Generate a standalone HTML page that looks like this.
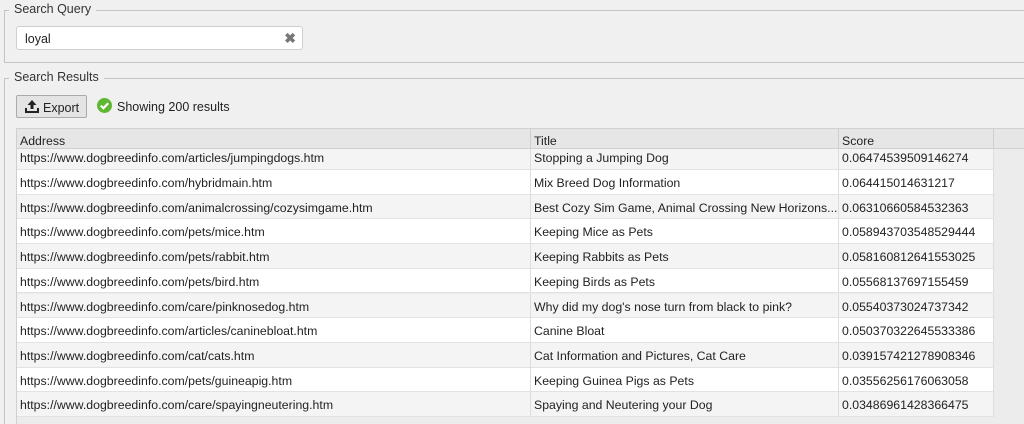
<!DOCTYPE html>
<html style="overflow:hidden;height:424px"><head><style>
*{box-sizing:border-box;margin:0;padding:0}
body{width:1024px;height:424px;background:#f0f0f0;font-family:"Liberation Sans",sans-serif;font-size:12px;color:#222;position:relative;overflow:hidden}
.fs{position:absolute;border:1px solid #c4c4c4;border-right:none}
.lg{position:absolute;background:#f0f0f0;padding:0 5px;font-size:12.5px;color:#333}
.inp{position:absolute;left:16px;top:26px;width:287px;height:24px;background:#fff;border:1px solid #cfcfcf;border-radius:3px;padding:5px 8px;font-size:12.5px}
.btn{position:absolute;left:16px;top:95px;width:71px;height:23px;border:1px solid #aaa;border-radius:2px;background:#e4e4e4;font-size:12.5px;padding:5px 0 0 26px}
.tbl{position:absolute;left:16px;top:128px;width:1008px;height:296px;background:#ececec;border:1px solid #d0d0d0;border-right:none;border-bottom:none;overflow:hidden}
.hd{position:absolute;top:0;height:20px;background:#e6e6e6;border-right:1px solid #cfcfcf;border-bottom:1px solid #cfcfcf;padding:5px 3px 0;font-size:12.3px}
.row{position:absolute;left:0;width:977px;height:24.7px}
.row div{position:absolute;top:0;height:100%;padding:6px 3px 0;border-right:1px solid #ddd;border-bottom:1px solid #e2e2e2;white-space:nowrap;overflow:hidden;font-size:12.3px}
.c1{left:0;width:514px}.c2{left:514px;width:308px}.c3{left:822px;width:155px}
</style></head><body>
<div class="fs" style="left:4px;top:10px;width:1030px;height:53px"></div>
<div class="lg" style="left:9px;top:2px">Search Query</div>
<div class="inp">loyal<span style="position:absolute;right:6px;top:3px;color:#777;font-size:14px;font-weight:bold">✖</span></div>
<div class="fs" style="left:4px;top:78px;width:1030px;height:360px"></div>
<div class="lg" style="left:9px;top:70px">Search Results</div>
<div class="btn"><svg style="position:absolute;left:8px;top:4px" width="14" height="13" viewBox="0 0 14 13"><path d="M7 0L2.5 5H5.5V9H8.5V5H11.5Z" fill="#222"/><path d="M0 8H2V11H12V8H14V13H0Z" fill="#222"/></svg>Export</div>
<svg style="position:absolute;left:97px;top:98px" width="15" height="15" viewBox="0 0 15 15"><circle cx="7.5" cy="7.5" r="7.5" fill="#5fb832"/><path d="M3.8 7.6L6.4 10.2L11.2 5.2" stroke="#fff" stroke-width="2.2" fill="none"/></svg>
<div style="position:absolute;left:117px;top:100px;font-size:12.5px">Showing 200 results</div>
<div class="tbl">
<div class="hd" style="left:0;width:514px">Address</div>
<div class="hd" style="left:514px;width:308px">Title</div>
<div class="hd" style="left:822px;width:155px">Score</div>
<div class="hd" style="left:977px;width:40px;border-right:none"></div>
<div style="position:absolute;top:20px;left:0;width:977px;height:269px;overflow:hidden">
<div class="row" style="top:-3.7px;background:#f4f4f4"><div class="c1">https://www.dogbreedinfo.com/articles/jumpingdogs.htm</div><div class="c2">Stopping a Jumping Dog</div><div class="c3">0.06474539509146274</div></div>
<div class="row" style="top:21px;background:#fff"><div class="c1">https://www.dogbreedinfo.com/hybridmain.htm</div><div class="c2">Mix Breed Dog Information</div><div class="c3">0.064415014631217</div></div>
<div class="row" style="top:45.7px;background:#f4f4f4"><div class="c1">https://www.dogbreedinfo.com/animalcrossing/cozysimgame.htm</div><div class="c2">Best Cozy Sim Game, Animal Crossing New Horizons...</div><div class="c3">0.06310660584532363</div></div>
<div class="row" style="top:70.4px;background:#fff"><div class="c1">https://www.dogbreedinfo.com/pets/mice.htm</div><div class="c2">Keeping Mice as Pets</div><div class="c3">0.058943703548529444</div></div>
<div class="row" style="top:95.1px;background:#f4f4f4"><div class="c1">https://www.dogbreedinfo.com/pets/rabbit.htm</div><div class="c2">Keeping Rabbits as Pets</div><div class="c3">0.058160812641553025</div></div>
<div class="row" style="top:119.8px;background:#fff"><div class="c1">https://www.dogbreedinfo.com/pets/bird.htm</div><div class="c2">Keeping Birds as Pets</div><div class="c3">0.05568137697155459</div></div>
<div class="row" style="top:144.5px;background:#f4f4f4"><div class="c1">https://www.dogbreedinfo.com/care/pinknosedog.htm</div><div class="c2">Why did my dog's nose turn from black to pink?</div><div class="c3">0.05540373024737342</div></div>
<div class="row" style="top:169.2px;background:#fff"><div class="c1">https://www.dogbreedinfo.com/articles/caninebloat.htm</div><div class="c2">Canine Bloat</div><div class="c3">0.050370322645533386</div></div>
<div class="row" style="top:193.9px;background:#f4f4f4"><div class="c1">https://www.dogbreedinfo.com/cat/cats.htm</div><div class="c2">Cat Information and Pictures, Cat Care</div><div class="c3">0.039157421278908346</div></div>
<div class="row" style="top:218.6px;background:#fff"><div class="c1">https://www.dogbreedinfo.com/pets/guineapig.htm</div><div class="c2">Keeping Guinea Pigs as Pets</div><div class="c3">0.03556256176063058</div></div>
<div class="row" style="top:243.3px;background:#f4f4f4"><div class="c1">https://www.dogbreedinfo.com/care/spayingneutering.htm</div><div class="c2">Spaying and Neutering your Dog</div><div class="c3">0.03486961428366475</div></div>
</div>
</div>
</body></html>
